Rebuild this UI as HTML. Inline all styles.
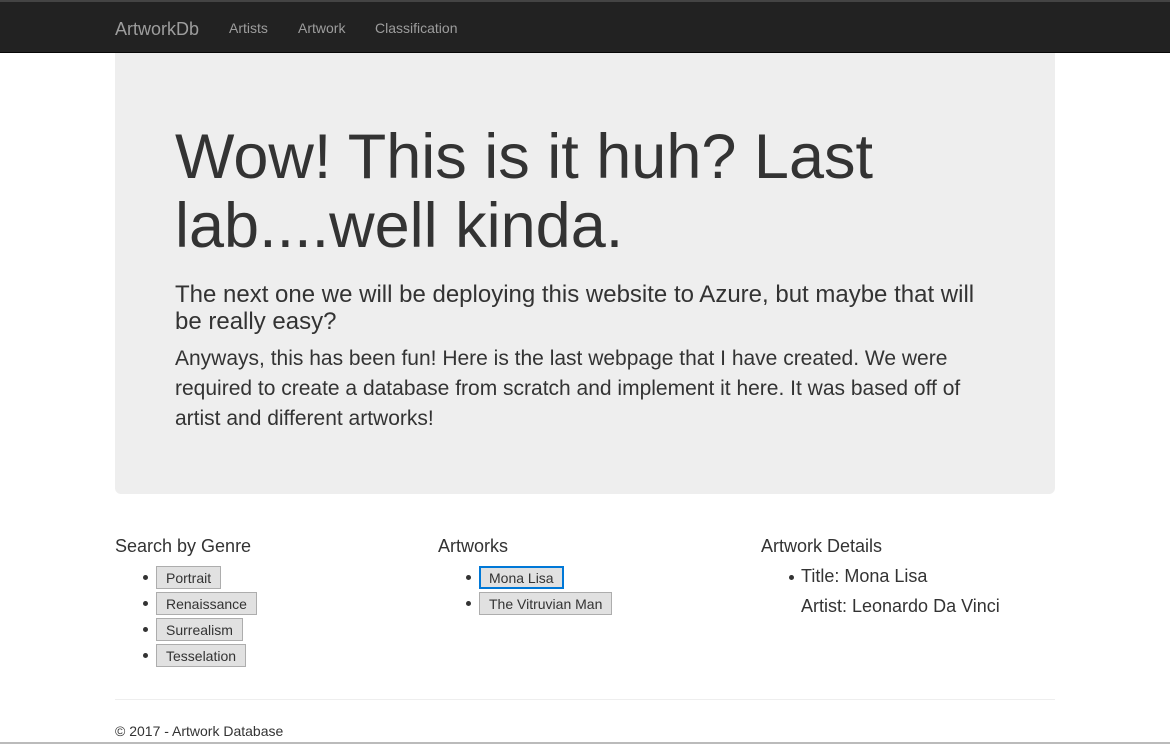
<!DOCTYPE html>
<html><head><meta charset="utf-8"><style>
*{box-sizing:border-box;margin:0;padding:0}
body{width:1170px;height:744px;overflow:hidden;background:#fff;font-family:"Liberation Sans",Arial,sans-serif;color:#333;position:relative}
.top{position:absolute;left:0;top:0;width:1170px;height:2px;background:#444}
.nav{position:absolute;left:0;top:2px;width:1170px;height:51px;background:#222;border-bottom:1px solid #080808}
.nav span{position:absolute;color:#9d9d9d;font-size:14px;top:18px}
.nav .brand{font-size:18px;top:17px;left:115px}
.jumbo{position:absolute;left:115px;top:53px;width:940px;height:441px;background:#eee;border-radius:0 0 6px 6px}
h1{position:absolute;left:60px;top:70px;width:820px;font-size:63px;font-weight:normal;line-height:69px;color:#333}
.lead1{position:absolute;left:60px;top:228px;width:820px;font-size:24px;line-height:27px}
.lead2{position:absolute;left:60px;top:291px;width:820px;font-size:21px;line-height:30px}
h4{position:absolute;font-size:18px;font-weight:normal;top:536px}
.li{position:absolute;height:23px;font-size:14px}
.li:before{content:"";position:absolute;left:-13px;top:9px;width:5px;height:5px;border-radius:50%;background:#333}
.btn{display:inline-block;height:23px;line-height:22px;padding:0 9px;background:#e1e1e1;border:1px solid #adadad;color:#333}
.btn.f{border:2px solid #0078d7;line-height:20px;padding:0 8px}
.det{position:absolute;left:801px;font-size:18px}
hr{position:absolute;left:115px;top:699px;width:940px;border:0;border-top:1px solid #eee}
.foot{position:absolute;left:115px;top:723px;font-size:14px}
.bot{position:absolute;left:0;top:742px;width:1170px;height:2px;background:#bbb}
</style></head><body>
<div class="top"></div>
<div class="nav"><span class="brand">ArtworkDb</span><span style="left:229px">Artists</span><span style="left:298px">Artwork</span><span style="left:375px">Classification</span></div>
<div class="jumbo">
<h1>Wow! This is it huh? Last lab....well kinda.</h1>
<p class="lead1">The next one we will be deploying this website to Azure, but maybe that will be really easy?</p>
<p class="lead2">Anyways, this has been fun! Here is the last webpage that I have created. We were required to create a database from scratch and implement it here. It was based off of artist and different artworks!</p>
</div>
<h4 style="left:115px">Search by Genre</h4>
<h4 style="left:438px">Artworks</h4>
<h4 style="left:761px">Artwork Details</h4>
<div class="li" style="left:156px;top:566px"><span class="btn">Portrait</span></div>
<div class="li" style="left:156px;top:592px"><span class="btn">Renaissance</span></div>
<div class="li" style="left:156px;top:618px"><span class="btn">Surrealism</span></div>
<div class="li" style="left:156px;top:644px"><span class="btn">Tesselation</span></div>
<div class="li" style="left:479px;top:566px"><span class="btn f">Mona Lisa</span></div>
<div class="li" style="left:479px;top:592px"><span class="btn">The Vitruvian Man</span></div>
<div class="det" style="top:566px">Title: Mona Lisa</div>
<div style="position:absolute;left:789px;top:575px;width:5px;height:5px;border-radius:50%;background:#333"></div>
<div class="det" style="top:596px">Artist: Leonardo Da Vinci</div>
<hr>
<div class="foot">© 2017 - Artwork Database</div>
<div class="bot"></div>
</body></html>
